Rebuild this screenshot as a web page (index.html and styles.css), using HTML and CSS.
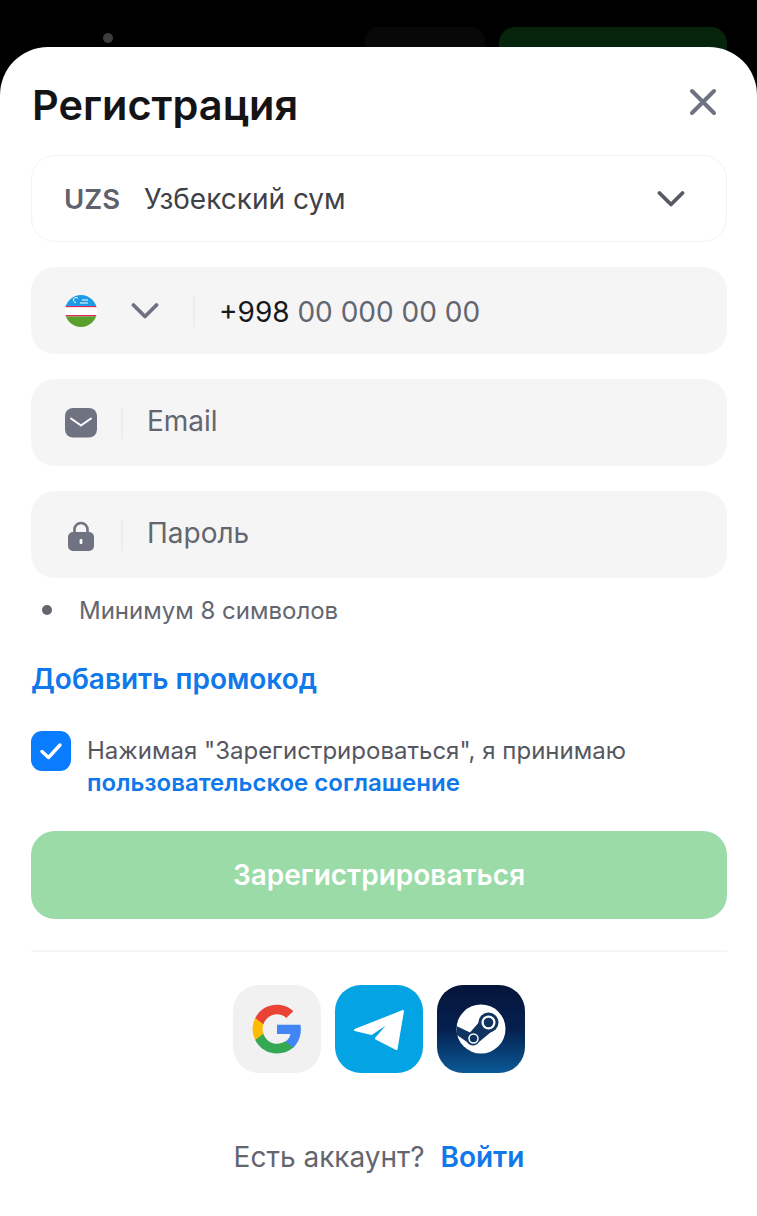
FILE: index.html
```html
<!DOCTYPE html>
<html lang="ru">
<head>
<meta charset="utf-8">
<title>Регистрация</title>
<link rel="stylesheet" href="styles.css">
</head>
<body>
<div class="backdrop">
  <span class="bg-dot"></span>
  <span class="bg-btn-dark"></span>
  <span class="bg-btn-green"></span>
</div>
<main class="sheet">
  <header class="head">
    <h1 class="title">Регистрация</h1>
    <svg class="close" viewBox="0 0 28 28" width="28" height="28"><path d="M3 3L25 25M25 3L3 25" fill="none" stroke="#6f7280" stroke-width="4" stroke-linecap="round"/></svg>
  </header>
  <div class="select">
    <span class="code">UZS</span>
    <span class="cur">Узбекский сум</span>
    <svg class="chev-sel" viewBox="0 0 28 18" width="28" height="18"><path d="M2.500 3L14 14.500L25.500 3" fill="none" stroke="#565a63" stroke-width="3.800" stroke-linecap="round" stroke-linejoin="round"/></svg>
  </div>
  <div class="field">
    <svg class="flag" viewBox="0 0 32 32" width="32" height="32"><defs><clipPath id="fc"><circle cx="16" cy="16" r="16"/></clipPath></defs><g clip-path="url(#fc)"><rect width="32" height="11" fill="#1e9be6"/><rect y="11" width="32" height="1.400" fill="#e4245a"/><rect y="12.400" width="32" height="7.600" fill="#fff"/><rect y="20" width="32" height="1.400" fill="#e4245a"/><rect y="21.400" width="32" height="11" fill="#5aa02c"/><path d="M11 7.500a2.500 2.500 0 1 1 2-4M15 8h8M17 5h6" stroke="#fff" stroke-width="1" fill="none"/></g></svg>
    <svg class="chev-ph" viewBox="0 0 28 18" width="28" height="18"><path d="M2.500 3L14 14.500L25.500 3" fill="none" stroke="#6f7280" stroke-width="3.800" stroke-linecap="round" stroke-linejoin="round"/></svg>
    <span class="sep sep-ph"></span>
    <span class="phone"><span class="prefix">+998</span> 00 000 00 00</span>
  </div>
  <div class="field">
    <svg class="ficon" viewBox="0 0 32 30" width="32" height="30"><rect width="32" height="29.500" rx="8" fill="#6f7280"/><path d="M6 10.500L16 17.500L26 10.500" fill="none" stroke="#fff" stroke-width="2" stroke-linecap="round" stroke-linejoin="round"/></svg>
    <span class="sep"></span>
    <span class="ph">Email</span>
  </div>
  <div class="field">
    <svg class="ficon" viewBox="0 0 32 32" width="32" height="32"><path d="M9.500 15V10.500a6.500 6.500 0 0 1 13 0V15" fill="none" stroke="#6f7280" stroke-width="2.600"/><rect x="3" y="13" width="26" height="19" rx="5" fill="#6f7280"/><rect x="14.600" y="20" width="2.800" height="5" rx="1" fill="#fff"/></svg>
    <span class="sep"></span>
    <span class="ph">Пароль</span>
  </div>
  <div class="hint"><span class="bullet"></span><span>Минимум 8 символов</span></div>
  <a class="promo">Добавить промокод</a>
  <div class="agree">
    <span class="check"><svg viewBox="0 0 24 20" width="24" height="20"><path d="M3 10.500L9.500 16.500L21 4" fill="none" stroke="#fff" stroke-width="3.400" stroke-linecap="round" stroke-linejoin="round"/></svg></span>
    <p class="agree-text">Нажимая "Зарегистрироваться", я принимаю<br><a class="link">пользовательское соглашение</a></p>
  </div>
  <button class="submit">Зарегистрироваться</button>
  <hr class="divider">
  <div class="socials">
    <span class="social s-google"><svg viewBox="0 0 48 48" width="52" height="52"><path fill="#4285F4" d="M46 24.500c0-1.600-.1-3.100-.4-4.500H24v8.700h12.400c-.5 2.800-2.100 5.200-4.500 6.800v5.700h7.300C43.400 36.800 46 31.200 46 24.500z"/><path fill="#34A853" d="M24 46.500c6.100 0 11.200-2 14.900-5.500l-7.300-5.600c-2 1.400-4.600 2.200-7.600 2.200-5.900 0-10.800-4-12.600-9.300H3.900v5.800C7.600 41.800 15.200 46.500 24 46.500z"/><path fill="#FBBC05" d="M11.400 28.300c-.5-1.400-.7-2.800-.7-4.300s.3-3 .7-4.300v-5.800H3.900C2.400 16.900 1.500 20.300 1.500 24s.9 7.100 2.400 10.100l7.500-5.800z"/><path fill="#EA4335" d="M24 10.400c3.300 0 6.300 1.100 8.600 3.400l6.500-6.500C35.200 3.700 30.100 1.500 24 1.500 15.200 1.500 7.600 6.200 3.900 13.900l7.500 5.800c1.800-5.300 6.700-9.300 12.600-9.300z"/></svg></span>
    <span class="social s-tg"><svg viewBox="0 0 88 88" width="88" height="88"><path fill="#fff" stroke="#fff" stroke-width="2" stroke-linejoin="round" d="M20 45L68 26L61.500 64L41 53.500L56 36L36.500 49Z"/></svg></span>
    <span class="social s-steam"><svg viewBox="0 0 88 88" width="88" height="88"><circle cx="44" cy="44" r="24.500" fill="#fff"/><path fill="#10335f" d="M19.500 41L33 47.500L44 35L54 47L42 57A7 7 0 0 1 30 57L20 50Z"/><circle cx="51.500" cy="37.500" r="10" fill="#10335f"/><circle cx="36.500" cy="53.500" r="4.500" fill="#10335f" stroke="#fff" stroke-width="1.500"/><circle cx="51.500" cy="37.500" r="7" fill="#fff"/><circle cx="51.500" cy="37.500" r="4.800" fill="#10335f"/></svg></span>
  </div>
  <p class="footer"><span class="foot-q">Есть аккаунт?</span><a class="login">Войти</a></p>
</main>
</body>
</html>
```
FILE: styles.css
```css
* { box-sizing: border-box; }
html, body { margin: 0; height: 100%; }
body {
  background: #000;
  font-family: Inter, "Noto Sans", sans-serif;
  width: 757px;
  height: 1216px;
  overflow: hidden;
  position: relative;
}
.backdrop { height: 47px; position: relative; }
.bg-dot { position: absolute; left: 103px; top: 33px; width: 10px; height: 10px; border-radius: 50%; background: #3d3d3d; }
.bg-btn-dark { position: absolute; left: 365px; top: 27px; width: 120px; height: 40px; border-radius: 14px; background: #080808; }
.bg-btn-green { position: absolute; left: 499px; top: 27px; width: 228px; height: 40px; border-radius: 16px; background: #06240c; }
.sheet {
  position: relative;
  height: 1169px;
  background: #fff;
  border-radius: 48px 48px 0 0;
  padding: 0 30px 0 31px;
  display: flex;
  flex-direction: column;
}
.head { display: flex; justify-content: space-between; align-items: center; height: 108px; padding-top: 8px; }
.title { margin: 0 0 0 1px; font-size: 41.500px; font-weight: 600; color: #141416; }
.close { margin-right: 10px; margin-top: -6px; }
.select {
  height: 87px;
  border: 1px solid #f2f3f5;
  border-radius: 24px;
  display: flex;
  align-items: center;
  padding: 0 41px 0 32px;
  font-size: 28px;
  margin-bottom: 25px;
}
.code { font-weight: 600; color: #5f626c; width: 80px; font-size: 27.500px; }
.cur { color: #3f4148; flex: 1; }
.field {
  height: 87px;
  background: #f5f5f6;
  border-radius: 24px;
  display: flex;
  align-items: center;
  padding-left: 34px;
  margin-bottom: 25px;
  font-size: 28px;
}
.field:last-of-type { margin-bottom: 0; }
.chev-ph { margin-left: 34px; }
.sep { width: 2px; height: 32px; background: #ebecee; margin: 0 24px 0 24px; }
.sep-ph { margin: 0 24px 0 34px; }
.phone { color: #63666f; padding-top: 2px; }
.prefix { color: #17181b; }
.ph { color: #63666f; padding-bottom: 3px; }
.hint { display: flex; align-items: center; margin-top: -9px; height: 32px; font-size: 24px; color: #63666f; padding-left: 11px; }
.bullet { width: 10px; height: 10px; border-radius: 50%; background: #63666f; margin-right: 27px; }
.promo { margin-top: 36px; font-size: 28px; font-weight: 600; color: #0f78ea; line-height: 34px; }
.agree { display: flex; margin-top: 35px; }
.check { width: 40px; height: 40px; border-radius: 11px; background: #0a7cff; display: flex; align-items: center; justify-content: center; flex: none; margin-right: 16px; }
.agree-text { margin: 4px 0 0; font-size: 24px; line-height: 32px; color: #55575f; }
.link { color: #0f78ea; font-weight: 600; }
.submit {
  margin-top: 32px;
  height: 88px;
  width: 696px;
  border: 0;
  border-radius: 24px;
  background: #9adba8;
  color: #fff;
  font: 600 28px Inter, "Noto Sans", sans-serif;
}
.divider { margin: 31px 0 0; border: 0; height: 2px; background: #f5f5f6; width: 696px; }
.socials { display: flex; justify-content: center; gap: 14px; margin-top: 33px; }
.social { width: 88px; height: 88px; border-radius: 26px; display: flex; align-items: center; justify-content: center; }
.s-google { background: #f1f1f2; }
.s-tg { background: #04a3e3; }
.s-steam { background: linear-gradient(180deg, #05153a 0%, #05204f 50%, #0a5a96 100%); }
.footer { margin: 66px 0 0; display: flex; justify-content: center; gap: 16px; font-size: 28px; line-height: 36px; }
.foot-q { color: #63666f; }
.login { color: #0f78ea; font-weight: 600; }
```
